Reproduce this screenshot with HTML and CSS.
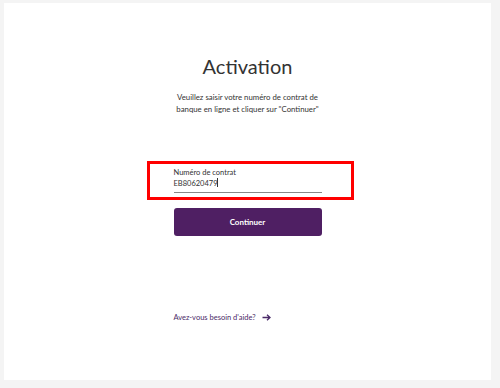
FILE: index.html
```html
<!DOCTYPE html>
<html lang="fr">
<head>
    <meta charset="UTF-8">
    <meta name="viewport" content="width=device-width, initial-scale=1.0">
    <title>Activation</title>
    <link rel="stylesheet" href="styles.css">
</head>
<body>
    <div class="panel">
        <div class="content">
            <h1 class="title">Activation</h1>
            <p class="intro">Veuillez saisir votre numéro de contrat de<br>banque en ligne et cliquer sur "Continuer"</p>

            <!-- highlighted field -->
            <div class="highlight">
                <label class="field-label" for="contract">Numéro de contrat</label>
                <div class="field-value" id="contract">EB80620479<span class="caret"></span></div>
            </div>

            <button class="btn-continue">Continuer</button>

            <a class="help-link">Avez-vous besoin d'aide?
                <svg class="arrow" width="9" height="7" viewBox="0 0 9 7">
                    <path d="M0.5 3.5H8M5 0.8L8 3.5L5 6.2" fill="none" stroke="#4a2a68" stroke-width="1.3"/>
                </svg>
            </a>
        </div>
    </div>
</body>
</html>
```

FILE: styles.css
```css
body {
    margin: 0;
    padding: 3px 9px 8px 4px;
    background-color: #f4f4f4;
    font-family: Lato, "Open Sans", sans-serif;
    color: #333;
}
.panel {
    background-color: #fff;
    height: 377px;
}
.content {
    width: 148px;
    margin: 0 auto;
    padding-top: 49px;
}
.title {
    margin: 0;
    font-size: 20px;
    font-weight: 400;
    text-align: center;
    white-space: nowrap;
    line-height: 28px;
    color: #333;
}
.intro {
    margin: 11px -40px 0;
    font-size: 7.8px;
    line-height: 12px;
    text-align: center;
    color: #333;
}
.highlight {
    margin: 46px -32px 0 -27px;
    padding: 3px 29px 4px 24px;
    border: 3px solid #ff0000;
}
.field-label {
    display: block;
    font-size: 7.5px;
    line-height: 11px;
}
.field-value {
    font-size: 7.5px;
    line-height: 12px;
    border-bottom: 1px solid #888;
    padding-bottom: 2px;
}
.caret {
    display: inline-block;
    width: 1px;
    height: 9px;
    background-color: #333;
    vertical-align: -1px;
}
.btn-continue {
    display: block;
    width: 100%;
    height: 28px;
    margin-top: 8px;
    border: none;
    border-radius: 3px;
    background-color: #4f1f63;
    color: #fff;
    font-family: inherit;
    font-size: 8px;
    font-weight: 700;
}
.help-link {
    display: flex;
    align-items: center;
    gap: 6px;
    margin-top: 77px;
    font-size: 7.5px;
    color: #4a2a68;
    cursor: pointer;
}
```
